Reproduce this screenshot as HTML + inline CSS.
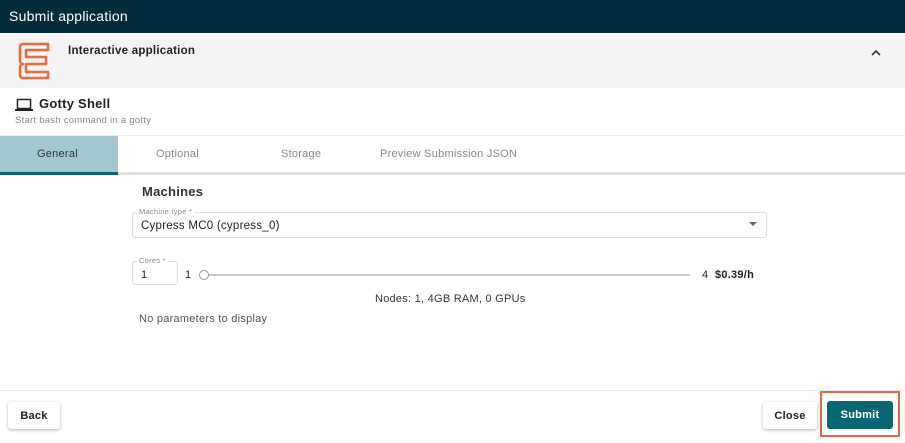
<!DOCTYPE html>
<html><head><style>
*{box-sizing:border-box;margin:0;padding:0}
body{width:905px;height:443px;overflow:hidden;background:#fff;font-family:"Liberation Sans",sans-serif;color:#222;position:relative;letter-spacing:0.25px}
.a{position:absolute}
</style></head><body>
<div class="a" style="left:0;top:0;width:905px;height:33px;background:#032c3b;color:#fff;font-size:14px;padding:8px 0 0 9px">Submit application</div>
<div class="a" style="left:0;top:33px;width:905px;height:55px;background:#f4f4f4"></div>
<svg class="a" style="left:18px;top:42px" width="34" height="38" viewBox="0 0 34 38"><path d="M5 2H30V8H8V15H28V22H8V30H30V36H5Q2 36 2 33V26Q2 22 5 22V22Q2 22 2 18V5Q2 2 5 2Z" fill="none" stroke="#f0683f" stroke-width="2.6" stroke-linejoin="round"/></svg>
<div class="a" style="left:68px;top:45px;font-size:11.5px;font-weight:bold;color:#222">Interactive application</div>
<svg class="a" style="left:870px;top:49px" width="12" height="8" viewBox="0 0 12 8"><path d="M2 6L6 2L10 6" fill="none" stroke="#333" stroke-width="1.6"/></svg>
<svg class="a" style="left:15px;top:98px" width="18" height="14" viewBox="0 0 18 14"><rect x="2.5" y="1.5" width="13" height="9" fill="none" stroke="#222" stroke-width="1.5"/><rect x="0" y="11" width="18" height="2" fill="#222"/></svg>
<div class="a" style="left:39px;top:96px;font-size:13px;font-weight:bold">Gotty Shell</div>
<div class="a" style="left:15px;top:115px;font-size:9.5px;color:#888">Start bash command in a gotty</div>
<div class="a" style="left:0;top:135px;width:905px;height:1px;background:#eee"></div>
<div class="a" style="left:0;top:136px;width:118px;height:36px;background:#a2c7cf"></div>
<div class="a" style="left:0;top:172px;width:905px;height:3px;background:#e0e0e0"></div>
<div class="a" style="left:0;top:172px;width:118px;height:3px;background:#0d6270"></div>
<div class="a" style="left:37px;top:148px;font-size:11px;color:#333">General</div>
<div class="a" style="left:156px;top:148px;font-size:11px;color:#888">Optional</div>
<div class="a" style="left:281px;top:148px;font-size:11px;color:#888">Storage</div>
<div class="a" style="left:380px;top:148px;font-size:11px;color:#888">Preview Submission JSON</div>
<div class="a" style="left:142px;top:184px;font-size:13px;font-weight:bold;color:#333">Machines</div>
<div class="a" style="left:132px;top:212px;width:635px;height:26px;border:1px solid #ddd;border-radius:3px"></div>
<div class="a" style="left:137px;top:207px;font-size:7.5px;color:#888;background:#fff;padding:0 2px">Machine type *</div>
<div class="a" style="left:141px;top:220px;font-size:11.5px;color:#222">Cypress MC0 (cypress_0)</div>
<div class="a" style="left:749px;top:222px;width:0;height:0;border-left:4px solid transparent;border-right:4px solid transparent;border-top:4px solid #666"></div>
<div class="a" style="left:132px;top:261px;width:46px;height:24px;border:1px solid #ddd;border-radius:3px"></div>
<div class="a" style="left:137px;top:256px;font-size:7.5px;color:#888;background:#fff;padding:0 2px">Cores *</div>
<div class="a" style="left:141px;top:269px;font-size:11px">1</div>
<div class="a" style="left:185px;top:269px;font-size:11px">1</div>
<div class="a" style="left:205px;top:274px;width:485px;height:2px;background:#ccc"></div>
<div class="a" style="left:199px;top:270px;width:10px;height:10px;border:1px solid #999;border-radius:50%;background:#fff"></div>
<div class="a" style="left:702px;top:269px;font-size:11px">4</div>
<div class="a" style="left:715px;top:269px;font-size:11px;font-weight:bold">$0.39/h</div>
<div class="a" style="left:375px;top:293px;font-size:11px;color:#333">Nodes: 1, 4GB RAM, 0 GPUs</div>
<div class="a" style="left:139px;top:313px;font-size:11px;color:#555">No parameters to display</div>
<div class="a" style="left:0;top:390px;width:905px;height:1px;background:#e8e8e8"></div>
<div class="a" style="left:8px;top:402px;width:52px;height:27px;border-radius:3px;box-shadow:0 1px 3px rgba(0,0,0,.3);background:#fff;font-size:11px;font-weight:bold;text-align:center;line-height:28px">Back</div>
<div class="a" style="left:763px;top:402px;width:54px;height:27px;border-radius:3px;box-shadow:0 1px 3px rgba(0,0,0,.3);background:#fff;font-size:11px;font-weight:bold;text-align:center;line-height:28px">Close</div>
<div class="a" style="left:820px;top:391px;width:80px;height:46px;border:2px solid #e8673f"></div>
<div class="a" style="left:827px;top:401px;width:66px;height:28px;border-radius:3px;background:#0b6673;color:#fff;font-size:11px;font-weight:bold;text-align:center;line-height:29px">Submit</div>
</body></html>
